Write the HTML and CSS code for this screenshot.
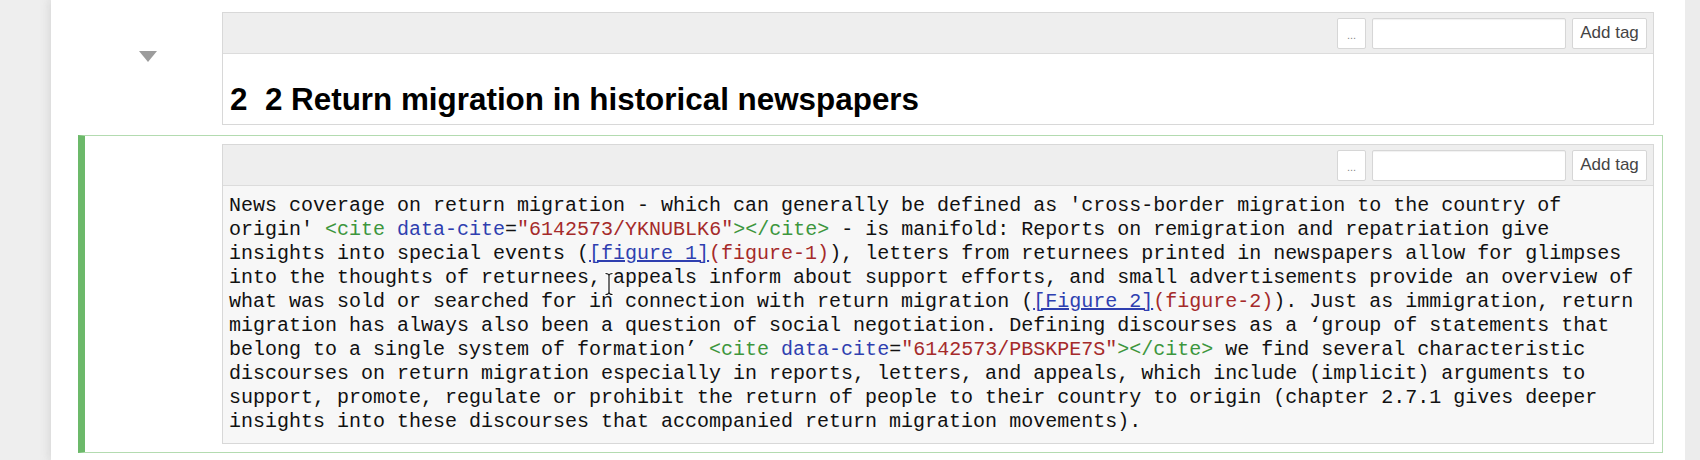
FILE: index.html
```html
<!DOCTYPE html>
<html lang="en">
<head>
<meta charset="utf-8">
<title>Notebook</title>
<link rel="stylesheet" href="styles.css">
</head>
<body>
<div class="page">
  <div class="gutter"></div>
  <main class="notebook">
    <div class="cell">
      <div class="prompt"><span class="collapse-arrow"></span></div>
      <div class="cell-box">
        <div class="toolbar">
          <button class="btn btn-more">...</button>
          <input class="tag-input" type="text">
          <button class="btn btn-tag">Add tag</button>
        </div>
        <div class="rendered">
          <h2 class="heading">2&nbsp; 2 Return migration in historical newspapers</h2>
        </div>
      </div>
    </div>
    <div class="cell selected">
      <div class="prompt"></div>
      <div class="cell-box">
        <div class="toolbar">
          <button class="btn btn-more">...</button>
          <input class="tag-input" type="text">
          <button class="btn btn-tag">Add tag</button>
        </div>
        <div class="editor">
<pre class="code">News coverage on return migration - which can generally be defined as 'cross-border migration to the country of origin' <span class="tag">&lt;cite</span> <span class="attr">data-cite</span>=<span class="str">"6142573/YKNUBLK6"</span><span class="tag">&gt;&lt;/cite&gt;</span> - is manifold: Reports on remigration and repatriation give insights into special events (<span class="link">[figure 1]</span><span class="str">(figure-1)</span>), letters from returnees printed in newspapers allow for glimpses into the thoughts of returnees, appeals inform about support efforts, and small advertisements provide an overview of what was sold or searched for in connection with return migration (<span class="link">[Figure 2]</span><span class="str">(figure-2)</span>). Just as immigration, return migration has always also been a question of social negotiation. Defining discourses as a ‘group of statements that belong to a single system of formation’ <span class="tag">&lt;cite</span> <span class="attr">data-cite</span>=<span class="str">"6142573/PBSKPE7S"</span><span class="tag">&gt;&lt;/cite&gt;</span> we find several characteristic discourses on return migration especially in reports, letters, and appeals, which include (implicit) arguments to support, promote, regulate or prohibit the return of people to their country to origin (chapter 2.7.1 gives deeper insights into these discourses that accompanied return migration movements).</pre>
          <svg class="ibeam" width="10" height="24" viewBox="0 0 10 24" aria-hidden="true">
            <path d="M1.5 1.5 Q5 1.5 5 4 Q5 1.5 8.5 1.5 M5 4 V20 M1.5 22.5 Q5 22.5 5 20 Q5 22.5 8.5 22.5" fill="none" stroke="#fff" stroke-width="3" stroke-linecap="round"/>
            <path d="M1.5 1.5 Q5 1.5 5 4 Q5 1.5 8.5 1.5 M5 4 V20 M1.5 22.5 Q5 22.5 5 20 Q5 22.5 8.5 22.5" fill="none" stroke="#111" stroke-width="1.2"/>
          </svg>
        </div>
      </div>
    </div>
  </main>
  <div class="scroll-gutter"></div>
</div>
</body>
</html>
```

FILE: styles.css
```css
* {
  box-sizing: border-box;
}

html, body {
  margin: 0;
  padding: 0;
  background: #eeeeee;
}

body {
  width: 1700px;
  height: 460px;
  overflow: hidden;
  font-family: "Liberation Sans", Arial, sans-serif;
}

.page {
  display: flex;
  height: 460px;
}

.gutter {
  width: 51px;
  flex: none;
  background: #eeeeee;
}

.notebook {
  width: 1634px;
  flex: none;
  background: #ffffff;
  box-shadow: 0 0 10px 1px rgba(87, 87, 87, 0.18);
  padding: 3px 22px 0 27px;
  display: flex;
  flex-direction: column;
  gap: 1px;
}

.scroll-gutter {
  flex: 1;
  background: #ececec;
}

.cell {
  display: flex;
  border: 1px solid transparent;
  border-left: 7px solid transparent;
  padding: 8px 8px 8px 0;
}

.cell.selected {
  border-color: #b3dbb0;
  border-left-color: #6cb96a;
}

.prompt {
  width: 137px;
  flex: none;
  padding: 39px 0 0 54px;
}

.collapse-arrow {
  display: block;
  width: 0;
  height: 0;
  border-left: 9px solid transparent;
  border-right: 9px solid transparent;
  border-top: 11px solid #9c9c9c;
}

.cell-box {
  flex: 1;
  border: 1px solid #d8d8d8;
  display: flex;
  flex-direction: column;
}

.toolbar {
  height: 41px;
  background: #eeeeee;
  border-bottom: 1px solid #dcdcdc;
  display: flex;
  justify-content: flex-end;
  align-items: center;
  gap: 6px;
  padding: 0 6px;
}

.btn {
  height: 31px;
  margin: 0;
  background: #ffffff;
  border: 1px solid #d6d6d6;
  border-radius: 2px;
  font-family: "Liberation Sans", Arial, sans-serif;
  color: #444444;
  padding: 0;
}

.btn-more {
  width: 29px;
  font-size: 11px;
  color: #888888;
  padding-top: 4px;
}

.btn-tag {
  width: 75px;
  font-size: 17px;
}

.tag-input {
  width: 194px;
  height: 31px;
  margin: 0;
  border: 1px solid #d6d6d6;
  border-radius: 2px;
  background: #ffffff;
  box-shadow: inset 0 1px 1px rgba(0, 0, 0, 0.06);
}

.rendered {
  background: #ffffff;
  padding: 28px 8px 6px 7px;
}

.heading {
  margin: 0;
  font-family: "Liberation Sans", Arial, sans-serif;
  font-weight: bold;
  font-size: 31.4px;
  line-height: 36px;
  color: #000000;
}

.editor {
  position: relative;
  flex: 1;
  background: #f7f7f7;
  padding: 8px 8px 9px 6px;
}

.code {
  margin: 0;
  font-family: "Courier New", "Liberation Mono", monospace;
  font-size: 20px;
  line-height: 24px;
  color: #111111;
  white-space: pre-wrap;
  word-break: normal;
  overflow-wrap: normal;
}

.tag {
  color: #3d963d;
}

.attr {
  color: #2f3fb0;
}

.str {
  color: #a52a2a;
}

.link {
  color: #2f3fb0;
  text-decoration: underline;
}

.ibeam {
  position: absolute;
  left: 381px;
  top: 86px;
}
```
